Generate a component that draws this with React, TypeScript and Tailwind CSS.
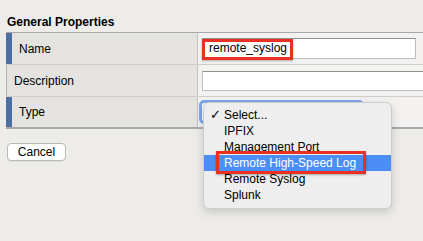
import React from 'react';

const options = ['Select...', 'IPFIX', 'Management Port', 'Remote High-Speed Log', 'Remote Syslog', 'Splunk'];

function LabelCell({ label, marked }: { label: string; marked?: boolean }) {
  return (
    <div className="flex h-full w-[192px] shrink-0 items-center border-r border-[#c4c3c0] bg-[#e4e3e0]">
      {marked ? (
        <div className="h-full w-[6px] bg-[#4a70a6]" />
      ) : (
        <div className="h-full w-px bg-[#b3b3b3]" />
      )}
      <span className="pl-[7px]">{label}</span>
    </div>
  );
}

export default function App() {
  return (
    <div
      className="relative h-[241px] w-[423px] overflow-hidden bg-[#edece9] text-[12px] leading-[14px] text-black"
      style={{ fontFamily: '"Liberation Sans", Arial, sans-serif' }}
    >
      <h2 className="pl-[7px] pt-[15px] font-bold leading-[14px]">General Properties</h2>

      {/* Properties table */}
      <div className="ml-[6px] mt-[3px] w-[440px] border-t border-[#a9a9a9]">
        <div className="flex h-[32px] border-b border-[#cfcecb]">
          <LabelCell label="Name" marked />
          <div className="relative flex-1 bg-[#f3f2f0] pl-[4px] pt-[5px]">
            <div className="h-[21px] w-[214px] border border-[#bdbdbd] border-t-[#8f8f8f] bg-white pl-[6px] leading-[19px]">
              remote_syslog
            </div>
            <div className="absolute left-[4px] top-[6px] h-[21px] w-[91px] border-[3px] border-[#e8321f] shadow-[0_1px_2px_rgba(0,0,0,0.3)]" />
          </div>
        </div>
        <div className="flex h-[32px] border-b border-[#cfcecb]">
          <LabelCell label="Description" />
          <div className="flex-1 bg-[#f3f2f0] pl-[4px] pt-[6px]">
            <div className="h-[20px] w-[240px] border border-[#bdbdbd] border-t-[#8f8f8f] bg-white" />
          </div>
        </div>
        <div className="flex h-[32px] border-b-2 border-[#a9a9a9]">
          <LabelCell label="Type" marked />
          <div className="relative flex-1 bg-[#f3f2f0] pl-[1px] pt-[3px]">
            <div className="h-[24px] w-[165px] rounded-[5px] border-[3px] border-[#7ea6ea] bg-white" />
          </div>
        </div>
      </div>

      <button className="ml-[7px] mt-[14px] flex h-[18px] w-[59px] items-center justify-center rounded-[4px] border border-[#b9b9b9] bg-white leading-[14px] shadow-[0_1px_0_rgba(0,0,0,0.05)]">
        Cancel
      </button>

      {/* Open select menu */}
      <div className="absolute left-[203px] top-[102px] w-[189px] rounded-[6px] border border-[#cdcdcd] bg-[#eeeeee] pb-[5px] pt-[4px] shadow-[0_3px_10px_rgba(0,0,0,0.16)]">
        {options.map((o) => {
          const active = o === 'Remote High-Speed Log';
          return (
            <div
              key={o}
              className={`relative flex h-[16px] items-center pl-[20px] leading-[16px] ${active ? 'bg-[#4b8ef5] text-white' : ''}`}
            >
              {o === 'Select...' && (
                <span className="absolute left-[6px] text-[13px]" style={{ fontFamily: '"DejaVu Sans", sans-serif' }}>
                  ✓
                </span>
              )}
              {o}
              {active && (
                <div className="absolute left-[12px] top-[-4px] h-[23px] w-[150px] border-[3px] border-[#e8321f] shadow-[0_1px_2px_rgba(0,0,0,0.3)]" />
              )}
            </div>
          );
        })}
      </div>
    </div>
  );
}
